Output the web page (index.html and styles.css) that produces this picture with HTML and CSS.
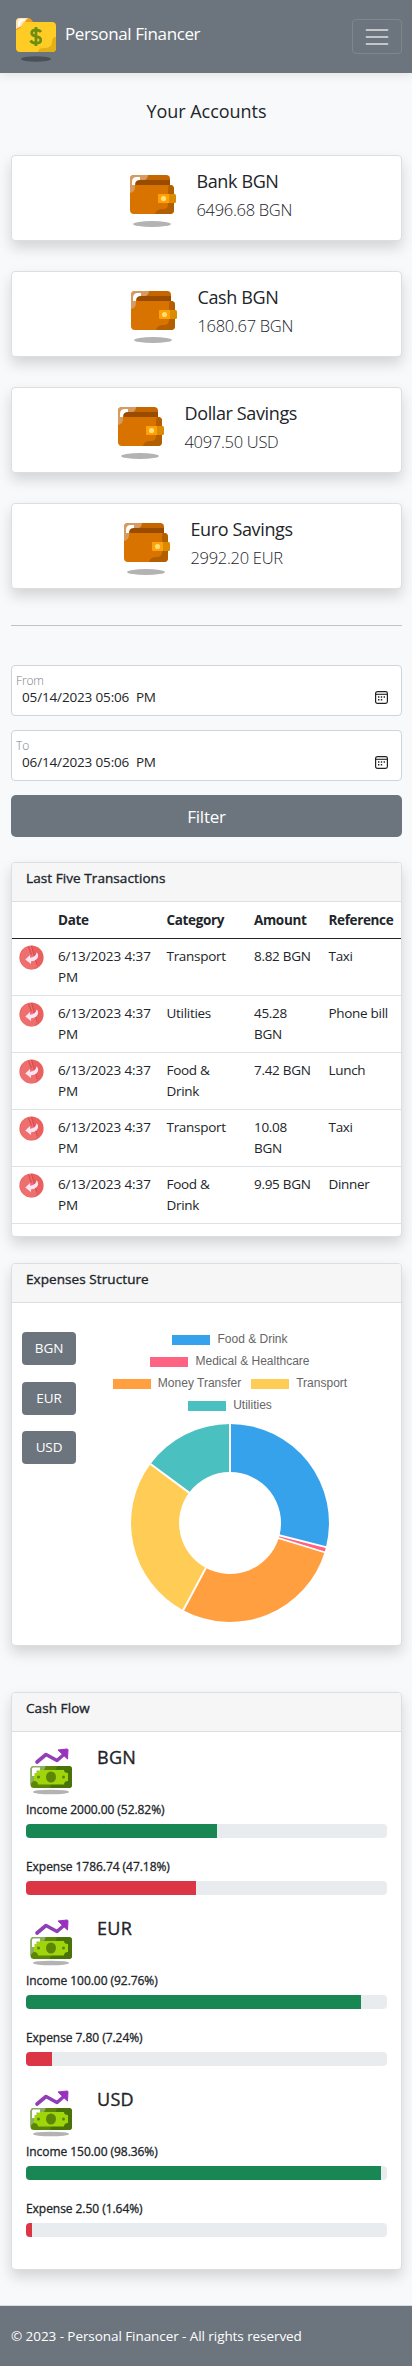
FILE: index.html
```html
<!DOCTYPE html>
<html lang="en">
<head>
<meta charset="utf-8">
<title>Personal Financer</title>
<link rel="stylesheet" href="styles.css">
</head>
<body>
<svg class="defs" aria-hidden="true">
  <symbol id="wallet" viewBox="0 0 48 54">
    <rect x="1" y="1" width="40" height="30" rx="4" fill="#c66600"/>
    <path d="M5 1h14q0 5-6 6H1V5q0-4 4-4Z" fill="#d79b62"/>
    <path d="M1 9q5 2 7 2h33q4 0 4 4v21q0 4-4 4H5q-4 0-4-4Z" fill="#d97300"/>
    <path d="M8 6h33v5H9q-2 0-3-1 0-4 2-4Z" fill="#994c00"/>
    <path d="M1 6h5v7q0 5-5 6Z" fill="#d79b62"/>
    <path d="M3 11V8q0-5 5-5h3v3Q6 6 6 11Z" fill="#fff"/>
    <path d="M40 11h1q4 0 4 4v21q0 4-4 4H26q1-5 8-5 5 0 5-5V15q0-2 1-4Z" fill="#b35f00"/>
    <rect x="29" y="20" width="18" height="9" rx="1.500" fill="#dc8a00"/>
    <path d="M30 20h10v9H30q-1 0-1-1v-7q0-1 1-1Z" fill="#ff9f0a"/>
    <circle cx="34.500" cy="24.500" r="2.600" fill="#ffe070"/>
    <ellipse cx="23" cy="50" rx="19" ry="3" fill="#b3b3b3"/>
  </symbol>
  <symbol id="expense" viewBox="0 0 26 26">
    <circle cx="13" cy="13" r="12.600" fill="#e9605f"/>
    <path d="M4 5A12 12 0 0 1 13 1l7 19-4 5A12 12 0 0 1 2 9Z" fill="#f07a78" opacity=".6"/>
    <path d="M13 1l6 20M10 2l3 8" stroke="#d94b4f" stroke-width="1.200"/>
    <path d="M18.500 7.500q2.800 4 0 7-2.500 2.700-6 2.500v2.700L6.500 15.200l5-4.700v2.700q5.500-.2 7-5.700Z" fill="#fce4f4"/>
  </symbol>
  <symbol id="cash" viewBox="0 0 50 50">
    <path d="M11 15l9-7.500 11 6 8-7" fill="none" stroke="#9040b5" stroke-width="3.600" stroke-linejoin="round" stroke-linecap="round"/>
    <path d="M32 3l9-1q1 0 1 1l-.5 9Z" fill="#9b30c0" stroke="#9b30c0" stroke-linejoin="round"/>
    <rect x="4.500" y="19" width="41.500" height="22" rx="3.500" fill="#5c8706"/>
    <path d="M31 19h12q3 0 3 3v16q0 3-3 3H24Z" fill="#477309"/>
    <path d="M4.500 37V22q0-3 3-3h12q0 4-6 7-5 3-5 7Z" fill="#8daf64"/>
    <path d="M12 23h26q0 3 4 3v8q-4 0-4 3.500H12q0-3.500-4-3.500v-8q4 0 4-3Z" fill="#a0d40b"/>
    <path d="M6 29v-7q0-1.500 1.500-1.500H14v3h-3.500V26H8.500v3Z" fill="#fff"/>
    <ellipse cx="25" cy="30" rx="5" ry="5.500" fill="#5c8706"/>
    <circle cx="12.500" cy="30" r="1.500" fill="#5c8706"/><circle cx="37.500" cy="30" r="1.500" fill="#5c8706"/>
    <ellipse cx="25" cy="45" rx="18" ry="2.300" fill="#b3b3b3"/>
  </symbol>
  <symbol id="calendar" viewBox="0 0 13 13">
    <rect x=".6" y=".6" width="11.800" height="11.800" rx="1.800" fill="none" stroke="#222" stroke-width="1.200"/>
    <path d="M.6 3.300h11.800" stroke="#222" stroke-width="1.100"/>
    <path d="M5.800 6h1.400M8.600 6H10M3 6h1.400M3 8.700h1.400M5.800 8.700h1.400" stroke="#222" stroke-width="1.400"/>
  </symbol>
</svg>

<header class="navbar">
  <a class="brand">
    <svg class="brand-logo" viewBox="0 0 42 46">
      <path d="M5 1h8q3 0 5 4l-2 8H1V5q0-4 4-4Z" fill="#ef9b1e"/>
      <path d="M5 1h8Q9 5 9 8L1 12V5q0-4 4-4Z" fill="#ffe3b0"/>
      <path d="M1 13q5-1 6-5 1-3 4-3h26q4 0 4 4v22q0 4-4 4H5q-4 0-4-4Z" fill="#ffcc25"/>
      <path d="M41 20v11q0 4-4 4H23q0-4 6-4 8 0 8-6 0-5 4-5Z" fill="#e2b117"/>
      <path d="M3 10V6q0-4 4-4h3v2Q5 4 5 9Z" fill="#fff"/>
      <path d="M26 15q-1.500-2.200-5-2.200-4.300 0-4.300 3.200 0 2.500 4.300 3.300 4.800.9 4.800 3.700 0 3.200-4.800 3.200-4 0-5.500-2.700M21 10v19" fill="none" stroke="#6b8e12" stroke-width="2.700"/>
      <ellipse cx="21" cy="42" rx="15" ry="2.700" fill="#4b5056"/>
    </svg>
    <span class="brand-name">Personal Financer</span>
  </a>
  <button class="toggler" aria-label="Menu">
    <svg viewBox="0 0 30 30" width="30" height="30"><path d="M4.500 8h21M4.500 15h21M4.500 22h21" stroke="#c4c7ca" stroke-width="1.800" stroke-linecap="round"/></svg>
  </button>
</header>

<main class="page">
  <h1 class="title"><span>Your Accounts</span></h1>
  <section class="accounts">
    <article class="card account"><svg class="wallet"><use href="#wallet"/></svg><div class="account-text bank"><h2>Bank BGN</h2><p>6496.68 BGN</p></div></article>
    <article class="card account"><svg class="wallet"><use href="#wallet"/></svg><div class="account-text cash"><h2>Cash BGN</h2><p>1680.67 BGN</p></div></article>
    <article class="card account"><svg class="wallet"><use href="#wallet"/></svg><div class="account-text dollar"><h2>Dollar Savings</h2><p>4097.50 USD</p></div></article>
    <article class="card account"><svg class="wallet"><use href="#wallet"/></svg><div class="account-text euro"><h2>Euro Savings</h2><p>2992.20 EUR</p></div></article>
  </section>
  <hr class="divider">
  <form class="filters">
    <div class="field"><label>From</label><div class="field-value"><span>05/14/2023 05:06&nbsp; PM</span><svg><use href="#calendar"/></svg></div></div>
    <div class="field"><label>To</label><div class="field-value"><span>06/14/2023 05:06&nbsp; PM</span><svg><use href="#calendar"/></svg></div></div>
    <button type="button" class="filter-btn">Filter</button>
  </form>

  <section class="card transactions">
    <h3 class="card-header">Last Five Transactions</h3>
    <table>
      <colgroup><col class="c-icon"><col class="c-date"><col class="c-cat"><col class="c-amount"><col></colgroup>
      <thead><tr><th></th><th>Date</th><th>Category</th><th>Amount</th><th>Reference</th></tr></thead>
      <tbody>
        <tr><td><svg class="tx"><use href="#expense"/></svg></td><td class="date">6/13/2023 4:37<br>PM</td><td>Transport</td><td>8.82 BGN</td><td>Taxi</td></tr>
        <tr><td><svg class="tx"><use href="#expense"/></svg></td><td class="date">6/13/2023 4:37<br>PM</td><td>Utilities</td><td>45.28<br>BGN</td><td>Phone bill</td></tr>
        <tr><td><svg class="tx"><use href="#expense"/></svg></td><td class="date">6/13/2023 4:37<br>PM</td><td>Food &amp;<br>Drink</td><td>7.42 BGN</td><td>Lunch</td></tr>
        <tr><td><svg class="tx"><use href="#expense"/></svg></td><td class="date">6/13/2023 4:37<br>PM</td><td>Transport</td><td>10.08<br>BGN</td><td>Taxi</td></tr>
        <tr><td><svg class="tx"><use href="#expense"/></svg></td><td class="date">6/13/2023 4:37<br>PM</td><td>Food &amp;<br>Drink</td><td>9.95 BGN</td><td>Dinner</td></tr>
      </tbody>
    </table>
  </section>

  <section class="card expenses">
    <h3 class="card-header">Expenses Structure</h3>
    <div class="expenses-body">
      <div class="currency-buttons"><button>BGN</button><button>EUR</button><button>USD</button></div>
      <div class="chart">
        <div class="legend">
          <div class="legend-row"><span class="key"><i class="blue"></i>Food &amp; Drink</span></div>
          <div class="legend-row"><span class="key"><i class="pink"></i>Medical &amp; Healthcare</span></div>
          <div class="legend-row"><span class="key"><i class="orange"></i>Money Transfer</span><span class="key"><i class="yellow"></i>Transport</span></div>
          <div class="legend-row"><span class="key"><i class="teal"></i>Utilities</span></div>
        </div>
        <svg class="donut" viewBox="0 0 200 200">
          <path fill="#36a2eb" d="M100 1A99 99 0 0 1 196 124.100L149.500 112.400A51 51 0 0 0 100 49Z"/>
          <path fill="#ff6384" d="M196 124.100A99 99 0 0 1 194.700 128.900L148.800 114.900A51 51 0 0 0 149.500 112.400Z"/>
          <path fill="#ff9f40" d="M194.700 128.900A99 99 0 0 1 53.200 187.200L75.900 144.900A51 51 0 0 0 148.800 114.900Z"/>
          <path fill="#ffcd56" d="M53.200 187.200A99 99 0 0 1 20.500 41L59.100 69.600A51 51 0 0 0 75.900 144.900Z"/>
          <path fill="#4bc0c0" d="M20.500 41A99 99 0 0 1 100 1V49A51 51 0 0 0 59.100 69.600Z"/>
          <path fill="none" stroke="#fff" stroke-width="2" d="M100 0V50M198 124.600L147 111.800M53.200 187.200L75.900 144.900M20.500 41L59.100 69.600"/>
          <path fill="none" stroke="#fff" stroke-width="1.800" d="M197 130L147 114.700"/>
        </svg>
      </div>
    </div>
  </section>

  <section class="card cashflow">
    <h3 class="card-header">Cash Flow</h3>
    <div class="cashflow-body">
      <div class="flow">
        <div class="flow-head"><svg><use href="#cash"/></svg><h4>BGN</h4></div>
        <p>Income 2000.00 (52.82%)</p><div class="bar"><div class="income" style="width:52.82%"></div></div>
        <p>Expense 1786.74 (47.18%)</p><div class="bar"><div class="expense" style="width:47.18%"></div></div>
      </div>
      <div class="flow">
        <div class="flow-head"><svg><use href="#cash"/></svg><h4>EUR</h4></div>
        <p>Income 100.00 (92.76%)</p><div class="bar"><div class="income" style="width:92.76%"></div></div>
        <p>Expense 7.80 (7.24%)</p><div class="bar"><div class="expense" style="width:7.24%"></div></div>
      </div>
      <div class="flow">
        <div class="flow-head"><svg><use href="#cash"/></svg><h4>USD</h4></div>
        <p>Income 150.00 (98.36%)</p><div class="bar"><div class="income" style="width:98.36%"></div></div>
        <p>Expense 2.50 (1.64%)</p><div class="bar"><div class="expense" style="width:1.64%"></div></div>
      </div>
    </div>
  </section>
</main>
<footer class="footer"><span>© 2023 - Personal Financer - All rights reserved</span></footer>
</body>
</html>
```

FILE: styles.css
```css
* { box-sizing: border-box; }
body {
  margin: 0;
  background: #f8f9fb;
  color: #212529;
  font: 400 13.5px/21px "Open Sans", "Noto Sans", sans-serif;
  letter-spacing: -0.3px;
}
h1, h2, h3, h4, p { margin: 0; font-weight: 400; }
button { font: inherit; letter-spacing: inherit; border: 0; }
svg { display: block; flex: none; }
.defs { position: absolute; width: 0; height: 0; }

.navbar {
  display: flex;
  justify-content: space-between;
  align-items: center;
  height: 73px;
  padding: 0 10px 0 15px;
  background: #6c757d;
  box-shadow: 0 2px 10px rgba(0, 0, 0, .1);
}
.brand { display: flex; gap: 8px; color: #fff; font-size: 17px; line-height: 26px; letter-spacing: -0.38px; }
.brand-logo { width: 42px; height: 46px; margin-top: 6px; }
.brand-name { padding-top: 10px; }
.toggler {
  display: grid;
  place-items: center;
  width: 50px;
  height: 35px;
  padding: 0;
  border: 1px solid #7f878e;
  border-radius: 4px;
  background: transparent;
}

.page { padding: 0 10px 0 11px; }
.title { height: 82px; padding-top: 25px; font-size: 18px; line-height: 26px; text-align: center; letter-spacing: -0.05px; }
.card {
  border: 1px solid #dcdee0;
  border-radius: 4px;
  background: #fff;
  box-shadow: 0 7px 14px rgba(0, 0, 0, .15);
}
.accounts { display: grid; gap: 30px; }
.account { display: flex; justify-content: center; height: 86px; padding: 18px 0 0 8px; }
.wallet { width: 48px; height: 54px; margin-right: 20px; }
.account-text h2 { margin-top: -7px; font-size: 18px; line-height: 28px; letter-spacing: -0.38px; white-space: nowrap; }
.account-text p { margin-top: 1px; font-size: 16.5px; line-height: 28px; font-weight: 300; letter-spacing: -0.3px; white-space: nowrap; }
.bank { width: 96px; }
.cash { width: 94px; }
.dollar { width: 120px; }
.euro { width: 108px; }
.divider { height: 1px; margin: 36px 0 39px; border: 0; background: #bdc3c7; }

.filters { display: grid; gap: 14px; }
.field { height: 51px; padding: 6px 13px 0 4px; border: 1px solid #ced4da; border-radius: 4px; background: #fff; letter-spacing: -0.15px; }
.field label { display: block; color: #7c8287; font-size: 12px; line-height: 18px; font-weight: 300; }
.field-value { display: flex; justify-content: space-between; align-items: center; height: 15px; padding-left: 6px; }
.field-value svg { width: 13px; height: 13px; }
.filter-btn { height: 42px; border-radius: 5px; background: #6c757d; color: #fff; font-size: 17px; letter-spacing: -0.2px; }

.transactions { height: 375px; margin-top: 25px; }
.card-header {
  height: 39px;
  padding: 5px 14px 0;
  border-bottom: 1px solid #dcdee0;
  background: #f6f6f7;
  border-radius: 3px 3px 0 0;
  font-size: 13.5px;
  line-height: 21px;
  letter-spacing: 0.08px;
  -webkit-text-stroke: .35px currentColor;
}
table { width: 100%; border-collapse: collapse; table-layout: fixed; }
.c-icon { width: 39px; }
.c-date { width: 108.5px; }
.c-cat { width: 87.5px; }
.c-amount { width: 74.5px; }
th, td { padding: 7px 0 7px 7px; text-align: left; vertical-align: top; white-space: nowrap; }
th { height: 36px; padding-top: 8px; padding-bottom: 5px; border-bottom: 1px solid #212529; font-weight: 700; letter-spacing: -0.35px; }
td { height: 57px; border-bottom: 1px solid #dee2e6; }
.date { letter-spacing: -0.1px; }
.tx { width: 25px; height: 25px; margin-top: -1px; }

.expenses { height: 383px; margin-top: 26px; }
.expenses-body { display: flex; padding: 29px 0 0 10px; }
.currency-buttons { display: grid; gap: 16.5px; align-content: start; margin-right: 36px; }
.currency-buttons button { width: 54px; height: 33px; padding: 0; border-radius: 4px; background: #6c757d; color: #fff; letter-spacing: -0.1px; }
.chart { width: 236px; font-family: "Liberation Sans", Arial, sans-serif; letter-spacing: 0; }
.legend-row { display: flex; justify-content: center; gap: 10px; height: 22px; color: #666; font-size: 12px; line-height: 15px; }
.key { display: flex; gap: 7px; align-items: center; height: 15px; white-space: nowrap; }
.key i { width: 38px; height: 10px; }
.blue { background: #36a2eb; }
.pink { background: #ff6384; }
.orange { background: #ff9f40; }
.yellow { background: #ffcd56; }
.teal { background: #4bc0c0; }
.donut { width: 200px; height: 200px; margin: 3px auto 0; }

.cashflow { height: 578px; margin-top: 46px; }
.cashflow-body { padding: 15px 14px 0; }
.flow { height: 171px; }
.flow-head { display: flex; height: 50px; }
.flow-head svg { width: 50px; height: 50px; }
.flow-head h4 { margin-left: 21px; font-size: 18px; line-height: 21px; letter-spacing: 0.3px; -webkit-text-stroke: .35px currentColor; }
.flow p { height: 27px; padding-top: 2px; font-size: 12px; line-height: 21px; letter-spacing: -0.05px; -webkit-text-stroke: .3px currentColor; }
.bar { height: 14px; margin-bottom: 16px; border-radius: 4px; background: #e9ecef; overflow: hidden; }
.bar div { height: 100%; }
.income { background: #198754; }
.expense { background: #dc3545; }

.footer {
  height: 61px;
  margin-top: 35px;
  padding: 20px 11px;
  border-top: 1px solid #d5dbe0;
  background: #6c757d;
  color: #fff;
  letter-spacing: -0.07px;
}
```
